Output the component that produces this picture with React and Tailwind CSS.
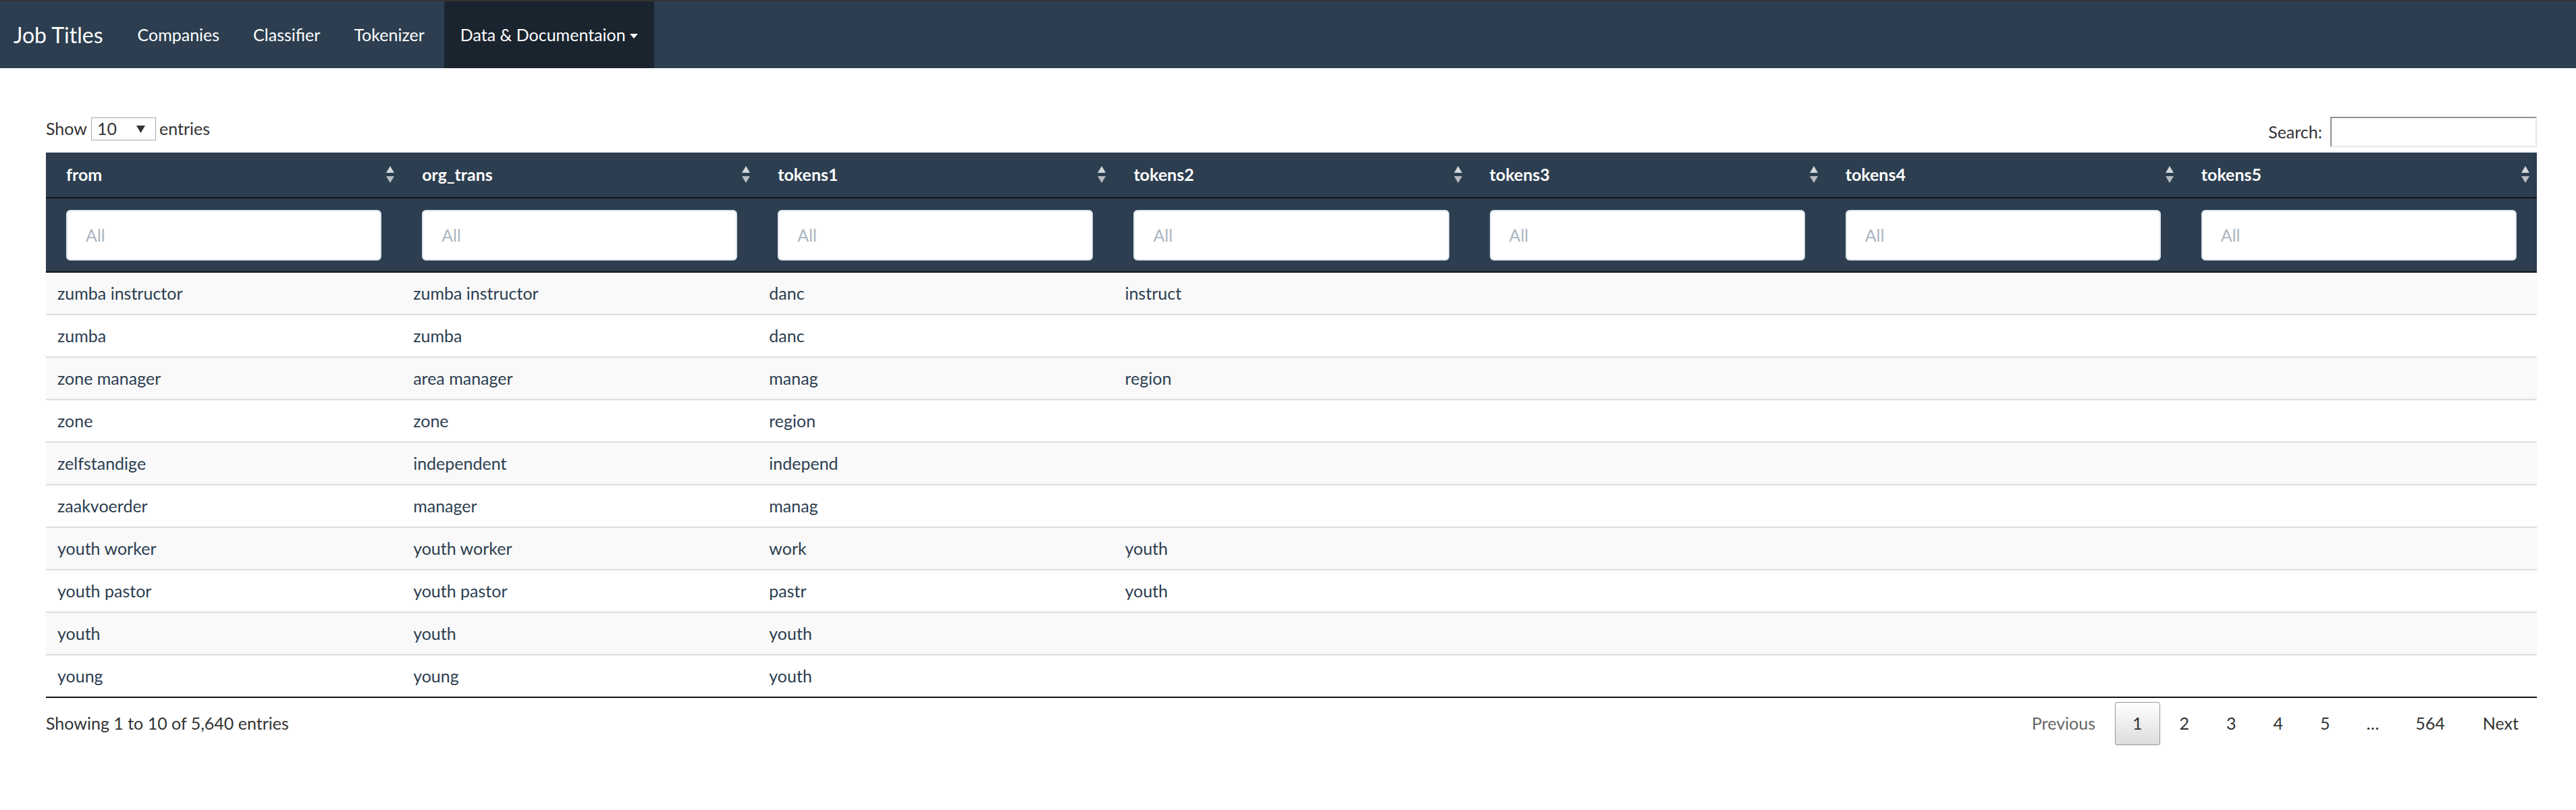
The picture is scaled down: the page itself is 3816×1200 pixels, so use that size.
import React from "react";

const columns = ["from", "org_trans", "tokens1", "tokens2", "tokens3", "tokens4", "tokens5"];

const rows = [
  ["zumba instructor", "zumba instructor", "danc", "instruct"],
  ["zumba", "zumba", "danc"],
  ["zone manager", "area manager", "manag", "region"],
  ["zone", "zone", "region"],
  ["zelfstandige", "independent", "independ"],
  ["zaakvoerder", "manager", "manag"],
  ["youth worker", "youth worker", "work", "youth"],
  ["youth pastor", "youth pastor", "pastr", "youth"],
  ["youth", "youth", "youth"],
  ["young", "young", "youth"],
];

const pages = ["1", "2", "3", "4", "5"];

function SortIcon() {
  return (
    <svg width="12" height="26" viewBox="0 0 12 26" className="shrink-0">
      <polygon points="6,0 12,10 0,10" fill="#d3d7db" />
      <polygon points="0,15 12,15 6,25" fill="#b7bcc1" />
    </svg>
  );
}

function Navbar() {
  return (
    <nav className="h-[101px] border-t-2 border-[#333] bg-[#2c3e50] flex items-stretch text-white">
      <div className="flex items-center pl-[20px] pr-[26px] text-[32px] leading-none">Job Titles</div>
      <a className="flex items-center px-[25px] text-[25px]">Companies</a>
      <a className="flex items-center px-[25px] text-[25px]">Classifier</a>
      <a className="flex items-center px-[25px] text-[25px]">Tokenizer</a>
      <a className="flex items-center px-[24px] text-[25px] bg-[#1a242f] ml-[4px]">
        Data &amp; Documentaion
        <span className="ml-[6px] mt-[3px] w-0 h-0 border-x-[6px] border-x-transparent border-t-[7px] border-t-white" />
      </a>
    </nav>
  );
}

function Controls() {
  return (
    <div className="flex justify-between items-start mb-[8px] text-[25px] text-[#333]">
      <div className="flex items-center h-[34px] gap-[6px] mt-[2px]">
        <span>Show</span>
        <div className="w-[96px] h-[34px] border border-[#a9a9a9] bg-white flex items-center justify-between pl-[8px] pr-[15px]">
          <span>10</span>
          <svg width="13" height="11" viewBox="0 0 13 11">
            <polygon points="0,0 13,0 6.5,11" fill="#333" />
          </svg>
        </div>
        <span className="-ml-[1px]">entries</span>
      </div>
      <div className="flex items-center gap-[12px] mt-[1px]">
        <span>Search:</span>
        <input
          type="text"
          className="w-[306px] h-[45px] bg-white border-2 border-t-[#8f8f8f] border-l-[#8f8f8f] border-b-[#e8e8e8] border-r-[#e8e8e8] outline-none"
        />
      </div>
    </div>
  );
}

function DataTable() {
  return (
    <table className="w-full table-fixed border-collapse">
      <thead className="bg-[#2c3e50] text-white">
        <tr className="border-b-2 border-[#111]">
          {columns.map((c) => (
            <th key={c} className="h-[67px] p-0 text-left font-bold text-[25px]">
              <div className="flex items-center justify-between pl-[30px] pr-[11px]">
                <span>{c}</span>
                <SortIcon />
              </div>
            </th>
          ))}
        </tr>
        <tr className="border-b-2 border-[#111]">
          {columns.map((c) => (
            <th key={c} className="h-[110px] px-[30px] py-0 font-normal">
              <input
                type="text"
                placeholder="All"
                className="w-full h-[75px] bg-white rounded-[6px] border-2 border-[#dce4ec] pl-[27px] text-[25px] text-[#2c3e50] placeholder:text-[#acb6c0] outline-none"
              />
            </th>
          ))}
        </tr>
      </thead>
      <tbody className="text-[25px] text-[#2c3e50] border-b-2 border-[#111]">
        {rows.map((r, i) => (
          <tr
            key={i}
            className={(i % 2 === 0 ? "bg-[#f9f9f9]" : "bg-white") + (i > 0 ? " border-t-2 border-[#ddd]" : "")}
          >
            {columns.map((c, j) => (
              <td key={c} className="h-[63px] px-[17px] py-0 whitespace-nowrap">
                {r[j] || ""}
              </td>
            ))}
          </tr>
        ))}
      </tbody>
    </table>
  );
}

function Footer() {
  return (
    <div className="flex justify-between items-center pt-[6px] text-[25px] text-[#333]">
      <div>Showing 1 to 10 of 5,640 entries</div>
      <div className="flex items-center">
        <span className="h-[64px] px-[25px] flex items-center border border-transparent text-[#666]">Previous</span>
        {pages.map((p) => (
          <span
            key={p}
            className={
              p === "1"
                ? "ml-[3px] h-[64px] px-[25px] flex items-center border border-[#979797] rounded-[3px] bg-linear-to-b from-white to-[#dcdcdc] text-[#333]"
                : "ml-[3px] h-[64px] px-[25px] flex items-center border border-transparent text-[#333]"
            }
          >
            {p}
          </span>
        ))}
        <span className="ml-[3px] h-[64px] px-[25px] flex items-center text-[#333]">…</span>
        <span className="ml-[3px] h-[64px] px-[25px] flex items-center border border-transparent text-[#333]">564</span>
        <span className="ml-[3px] h-[64px] px-[26px] flex items-center border border-transparent text-[#333]">Next</span>
      </div>
    </div>
  );
}

export default function App() {
  return (
    <div className="min-h-screen bg-white font-['Lato','Liberation_Sans',sans-serif]">
      <Navbar />
      <div className="pt-[71px] pl-[68px] pr-[58px]">
        <Controls />
        <DataTable />
        <Footer />
      </div>
    </div>
  );
}
